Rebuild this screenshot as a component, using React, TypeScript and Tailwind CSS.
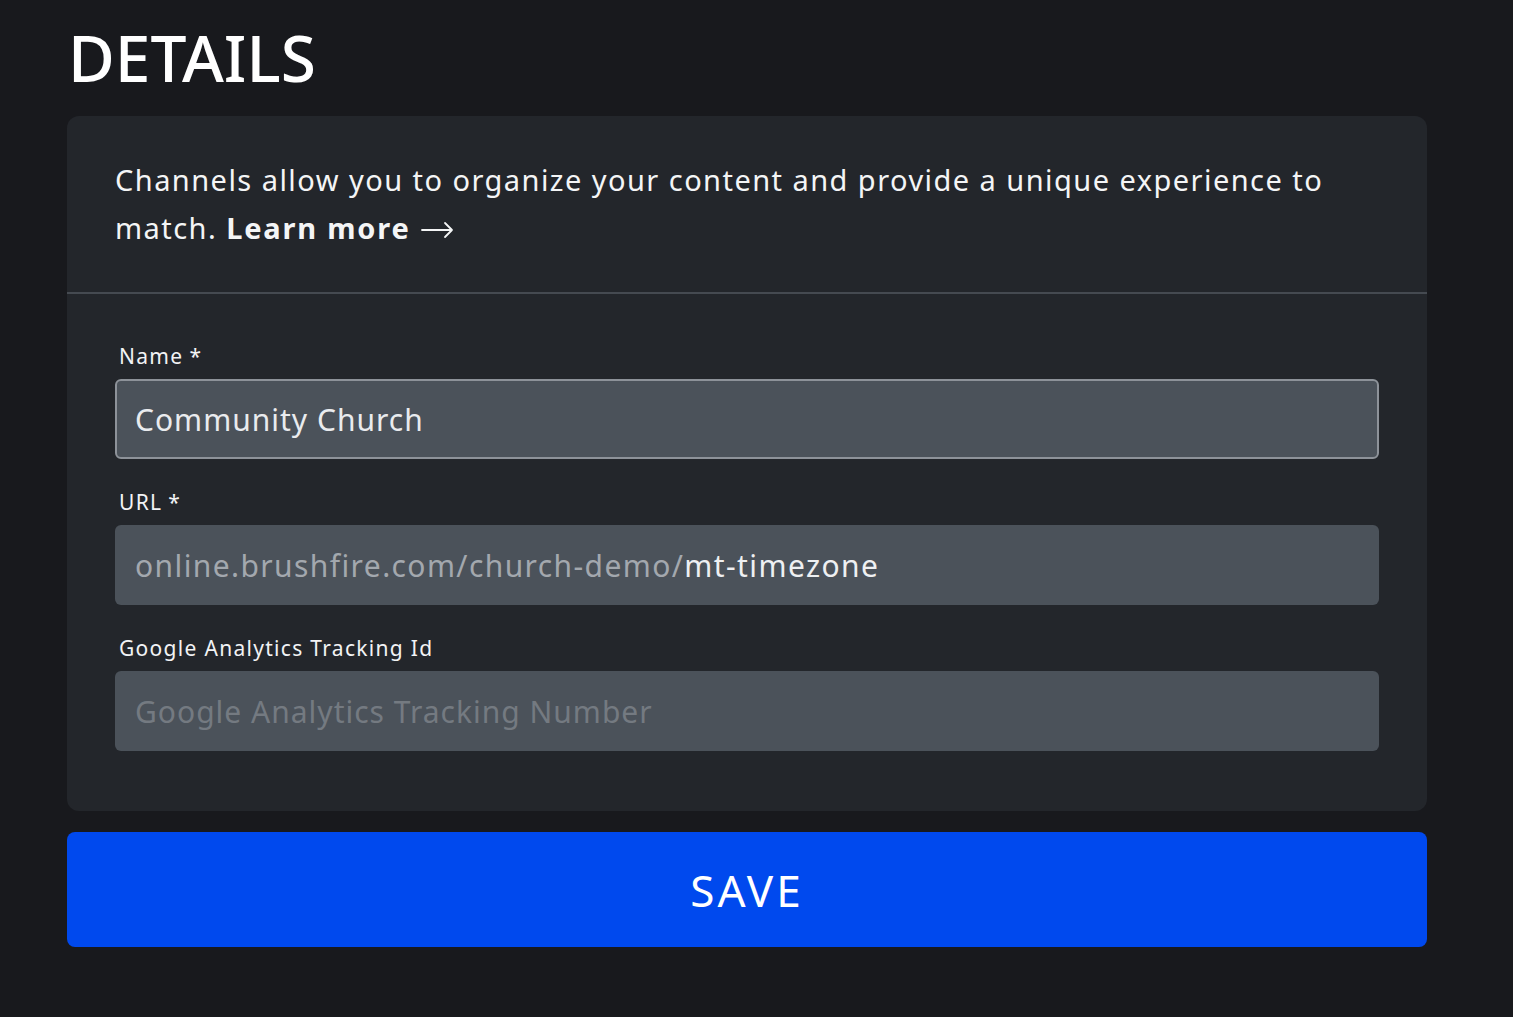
const font = { fontFamily: '"Noto Sans", "Open Sans", sans-serif' };

function Field({
  label,
  required,
  children,
}: {
  label: string;
  required?: boolean;
  children: React.ReactNode;
}) {
  return (
    <div className="flex flex-col">
      <label className="text-[21px] leading-[28px] tracking-[1.3px] text-[#f2f3f5] pl-[4px] mb-[9px]">
        {label}
        {required && <span className="ml-[6px] align-top">*</span>}
      </label>
      {children}
    </div>
  );
}

export default function App() {
  return (
    <div className="min-h-screen bg-[#18191d] text-white" style={font}>
      <div className="w-[1360px] ml-[67px] pt-[22px]">
        <h1 className="text-[64px] leading-[72px] font-medium pl-[1px]">
          DETAILS
        </h1>

        <div className="mt-[22px] bg-[#23262b] rounded-[12px]">
          <div className="px-[48px] pt-[40px] pb-[40px] border-b-2 border-[#454a51]">
            <p className="text-[29px] leading-[48px] tracking-[1.45px] text-[#f4f5f6]">
              Channels allow you to organize your content and provide a unique experience to match.{" "}
              <b className="font-bold tracking-[1.8px]">Learn more</b>
              <svg
                className="inline-block align-middle ml-[10px] -mt-[4px]"
                width="33"
                height="20"
                viewBox="0 0 33 20"
                fill="none"
                stroke="currentColor"
                strokeWidth="1.8"
                strokeLinecap="round"
                strokeLinejoin="round"
              >
                <path d="M1 11H31M24 4L31 11L24 18" />
              </svg>
            </p>
          </div>

          <div className="px-[48px] pt-[48px] pb-[60px] flex flex-col gap-[29px]">
            <Field label="Name" required>
              <div className="h-[80px] rounded-[6px] border-2 border-[#8d9299] bg-[#4b525a] flex items-center px-[18px] text-[30px] tracking-[1px] text-[#e9ebee]">
                Community Church
              </div>
            </Field>

            <Field label="URL" required>
              <div className="h-[80px] rounded-[6px] bg-[#4b525a] flex items-center px-[20px] text-[30px] tracking-[1.4px]">
                <span className="text-[#a3a8ae]">online.brushfire.com/church-demo/</span>
                <span className="text-[#eef0f2]">mt-timezone</span>
              </div>
            </Field>

            <Field label="Google Analytics Tracking Id">
              <div className="h-[80px] rounded-[6px] bg-[#4b525a] flex items-center px-[20px] text-[30px] tracking-[1px] text-[#747a81]">
                Google Analytics Tracking Number
              </div>
            </Field>
          </div>
        </div>

        <button className="mt-[21px] w-full h-[115px] rounded-[8px] bg-[#0049ee] text-[44px] tracking-[3px] text-white">
          SAVE
        </button>
      </div>
    </div>
  );
}
